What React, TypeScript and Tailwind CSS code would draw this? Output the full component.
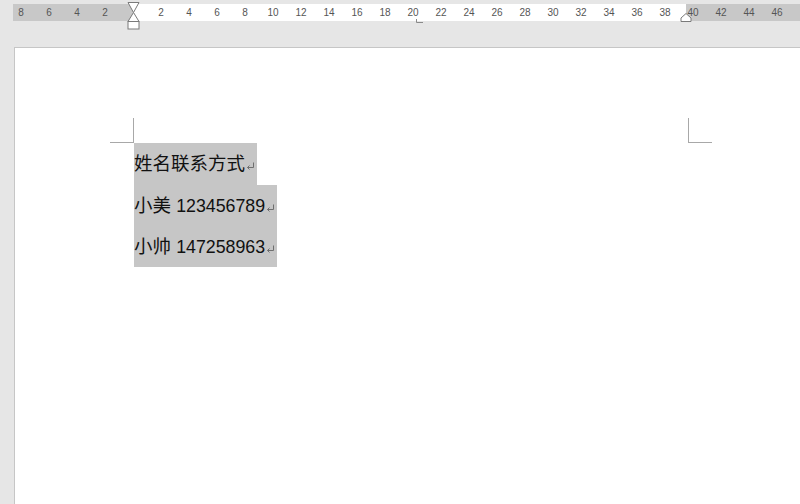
import React from "react";

const leftLabels = [
  { n: 8, x: 21 },
  { n: 6, x: 49 },
  { n: 4, x: 77 },
  { n: 2, x: 105 },
];

const rightLabels = Array.from({ length: 23 }, (_, i) => ({
  n: (i + 1) * 2,
  x: 161 + i * 28,
}));

function ReturnMark() {
  return (
    <svg width="9" height="8" viewBox="0 0 9 8" className="ml-[1px] mt-[4px] shrink-0">
      <path d="M7.5 0.5 V5.5 H1.5" fill="none" stroke="#6f6f6f" strokeWidth="1" />
      <path d="M3.5 3.5 L1.5 5.5 L3.5 7.5" fill="none" stroke="#6f6f6f" strokeWidth="1" />
    </svg>
  );
}

function Line({ children, h }: { children: React.ReactNode; h: string }) {
  return (
    <div className={`flex w-fit items-center bg-[#c6c6c6] pr-[2px] ${h}`}>
      <span className="whitespace-pre">{children}</span>
      <ReturnMark />
    </div>
  );
}

export default function App() {
  return (
    <div className="relative flex h-[504px] w-[800px] flex-col overflow-hidden bg-[#e6e6e6] font-['Liberation_Sans','Noto_Sans_CJK_SC',sans-serif]">
      {/* ruler */}
      <div className="relative mt-[4px] flex h-[17px] text-[10px] text-[#555]">
        <div className="w-[13px]" />
        <div className="w-[120px] bg-[#c8c8c8]" />
        <div className="w-[553px] bg-white" />
        <div className="flex-1 bg-[#c8c8c8]" />
        {[...leftLabels, ...rightLabels].map((l) => (
          <span
            key={l.n + "-" + l.x}
            className="absolute top-0 flex h-[17px] w-[20px] -translate-x-1/2 items-center justify-center leading-none"
            style={{ left: l.x }}
          >
            {l.n}
          </span>
        ))}
      </div>

      {/* indent markers */}
      <svg className="pointer-events-none absolute left-0 top-0" width="800" height="32">
        <polygon points="128,2.5 139,2.5 133.5,12.5" fill="#fff" stroke="#7a7a7a" />
        <polygon points="133.5,12.5 128,21.5 139,21.5" fill="#fff" stroke="#7a7a7a" />
        <rect x="128" y="21.5" width="11" height="7.5" fill="#fff" stroke="#7a7a7a" />
        <polygon points="686,13.5 691,18 691,21.5 681,21.5 681,18" fill="#fff" stroke="#7a7a7a" />
        <path d="M416.5 19 V22.5 H423" fill="none" stroke="#8a8a8a" />
      </svg>

      {/* page */}
      <div className="ml-[14px] mt-[26px] flex-1 border-l border-t border-[#c6c6c6] bg-white pt-[70px]">
        <div className="flex">
          <div className="ml-[95px] h-[25px] w-[24px] border-b border-r border-[#a8a8a8]" />
          <div className="ml-[554px] h-[25px] w-[24px] border-b border-l border-[#a8a8a8]" />
        </div>
        <div className="pl-[119px] text-[18.5px] text-[#111]">
          <Line h="h-[42px]">姓名联系方式</Line>
          <Line h="h-[41px]">
            小美 <span className="text-[17.8px]">123456789</span>
          </Line>
          <Line h="h-[41px]">
            小帅 <span className="text-[17.8px]">147258963</span>
          </Line>
        </div>
      </div>
    </div>
  );
}
